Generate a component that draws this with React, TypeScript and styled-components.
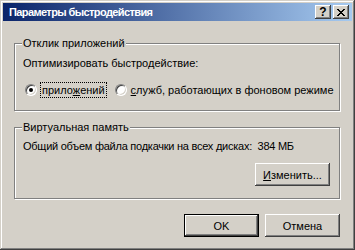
import React from 'react'
import styled, { createGlobalStyle } from 'styled-components'

const GlobalStyle = createGlobalStyle`
  html, body {
    margin: 0;
    padding: 0;
    background: #d4d0c8;
  }
  body {
    font-family: "Liberation Sans", Arial, sans-serif;
    font-size: 11px;
    color: #000;
  }
`

const face = '#d4d0c8'

const Window = styled.div`
  box-sizing: border-box;
  width: 355px;
  height: 250px;
  padding: 3px;
  background: ${face};
  box-shadow: inset -1px -1px #404040, inset 1px 1px ${face},
    inset -2px -2px #808080, inset 2px 2px #fff;
  display: flex;
  flex-direction: column;
`

const TitleBar = styled.div`
  height: 18px;
  display: flex;
  align-items: center;
  padding: 0 3px 0 3px;
  background: linear-gradient(to right, #0a246a, #a6caf0);
`

const Title = styled.div`
  flex: 1;
  color: #fff;
  font-weight: bold;
  font-size: 11px;
  letter-spacing: -0.6px;
  padding-left: 3px;
`

const CaptionButton = styled.div<{ $gap?: number }>`
  box-sizing: border-box;
  width: 16px;
  height: 14px;
  margin-left: ${(p) => p.$gap ?? 0}px;
  background: ${face};
  box-shadow: inset -1px -1px #404040, inset 1px 1px #fff,
    inset -2px -2px #808080;
  display: flex;
  align-items: center;
  justify-content: center;
  font-weight: bold;
  font-size: 12px;
  line-height: 12px;
`

const Body = styled.div`
  flex: 1;
  display: flex;
  flex-direction: column;
  padding: 22px 12px 0 11px;
`

const Group = styled.div<{ $h: number; $top?: number }>`
  position: relative;
  box-sizing: border-box;
  height: ${(p) => p.$h}px;
  margin-top: ${(p) => p.$top ?? 0}px;
  border: 1px solid #808080;
  box-shadow: inset 1px 1px #fff, 1px 1px #fff;
  display: flex;
  flex-direction: column;
`

const Legend = styled.span`
  position: absolute;
  left: 7px;
  top: -8px;
  padding: 0 1px;
  background: ${face};
  line-height: 14px;
`

const Line = styled.div<{ $top: number; $left: number; $tight?: boolean }>`
  margin: ${(p) => p.$top}px 0 0 ${(p) => p.$left}px;
  line-height: 14px;
  white-space: nowrap;
  letter-spacing: ${(p) => (p.$tight ? '-0.25px' : 'normal')};
`

const RadioRow = styled.div`
  display: flex;
  align-items: center;
  margin: 13px 0 0 10px;
  white-space: nowrap;
`

const Radio = styled.span<{ $checked?: boolean; $gap?: number }>`
  position: relative;
  box-sizing: border-box;
  width: 12px;
  height: 12px;
  margin-left: ${(p) => p.$gap ?? 0}px;
  border-radius: 50%;
  background: #fff;
  border: 1px solid;
  border-color: #808080 #fff #fff #808080;
  box-shadow: inset 1px 1px #404040, inset -1px -1px ${face};
  flex: none;
  &::after {
    content: '';
    display: ${(p) => (p.$checked ? 'block' : 'none')};
    position: absolute;
    left: 3px;
    top: 3px;
    width: 4px;
    height: 4px;
    border-radius: 50%;
    background: #000;
  }
`

const RadioLabel = styled.span<{ $focus?: boolean; $gap: number }>`
  margin-left: ${(p) => p.$gap}px;
  padding: 0 1px;
  line-height: 14px;
  outline: ${(p) => (p.$focus ? '1px dotted #000' : 'none')};
  outline-offset: 0;
`

const Key = styled.span`
  text-decoration: underline;
`

const ButtonRow = styled.div`
  display: flex;
  justify-content: flex-end;
  gap: 6px;
  margin-top: 15px;
`

const Button = styled.div<{ $default?: boolean }>`
  box-sizing: border-box;
  width: 75px;
  height: 23px;
  background: ${face};
  display: flex;
  align-items: center;
  justify-content: center;
  border: ${(p) => (p.$default ? '1px solid #000' : 'none')};
  box-shadow: inset -1px -1px #404040, inset 1px 1px #fff,
    inset -2px -2px #808080;
`

const ChangeButton = styled(Button)`
  align-self: flex-end;
  margin: 10px 9px 0 0;
`

const CloseGlyph = () => (
  <svg width="8" height="7" viewBox="0 0 8 7" shapeRendering="crispEdges">
    <path
      d="M0 0h2v1h-2zM6 0h2v1h-2zM1 1h2v1h-2zM5 1h2v1h-2zM2 2h4v1h-4zM3 3h2v1h-2zM2 4h4v1h-4zM1 5h2v1h-2zM5 5h2v1h-2zM0 6h2v1h-2zM6 6h2v1h-2z"
      fill="#000"
    />
  </svg>
)

const App: React.FC = () => {
  return (
    <>
      <GlobalStyle />
      <Window>
        <TitleBar>
          <Title>Параметры быстродействия</Title>
          <CaptionButton>?</CaptionButton>
          <CaptionButton $gap={2}>
            <CloseGlyph />
          </CaptionButton>
        </TitleBar>
        <Body>
          <Group $h={68}>
            <Legend>Отклик приложений</Legend>
            <Line $top={12} $left={8}>
              Оптимизировать быстродействие:
            </Line>
            <RadioRow>
              <Radio $checked />
              <RadioLabel $focus $gap={4}>
                прило<Key>ж</Key>ений
              </RadioLabel>
              <Radio $gap={9} />
              <RadioLabel $gap={3}>
                <Key>с</Key>лужб, работающих в фоновом режиме
              </RadioLabel>
            </RadioRow>
          </Group>
          <Group $h={72} $top={16}>
            <Legend>Виртуальная память</Legend>
            <Line $top={11} $left={8} $tight>
              Общий объем файла подкачки на всех дисках:&nbsp; 384 МБ
            </Line>
            <ChangeButton>
              <Key>И</Key>зменить...
            </ChangeButton>
          </Group>
          <ButtonRow>
            <Button $default>OK</Button>
            <Button>Отмена</Button>
          </ButtonRow>
        </Body>
      </Window>
    </>
  )
}

export default App
